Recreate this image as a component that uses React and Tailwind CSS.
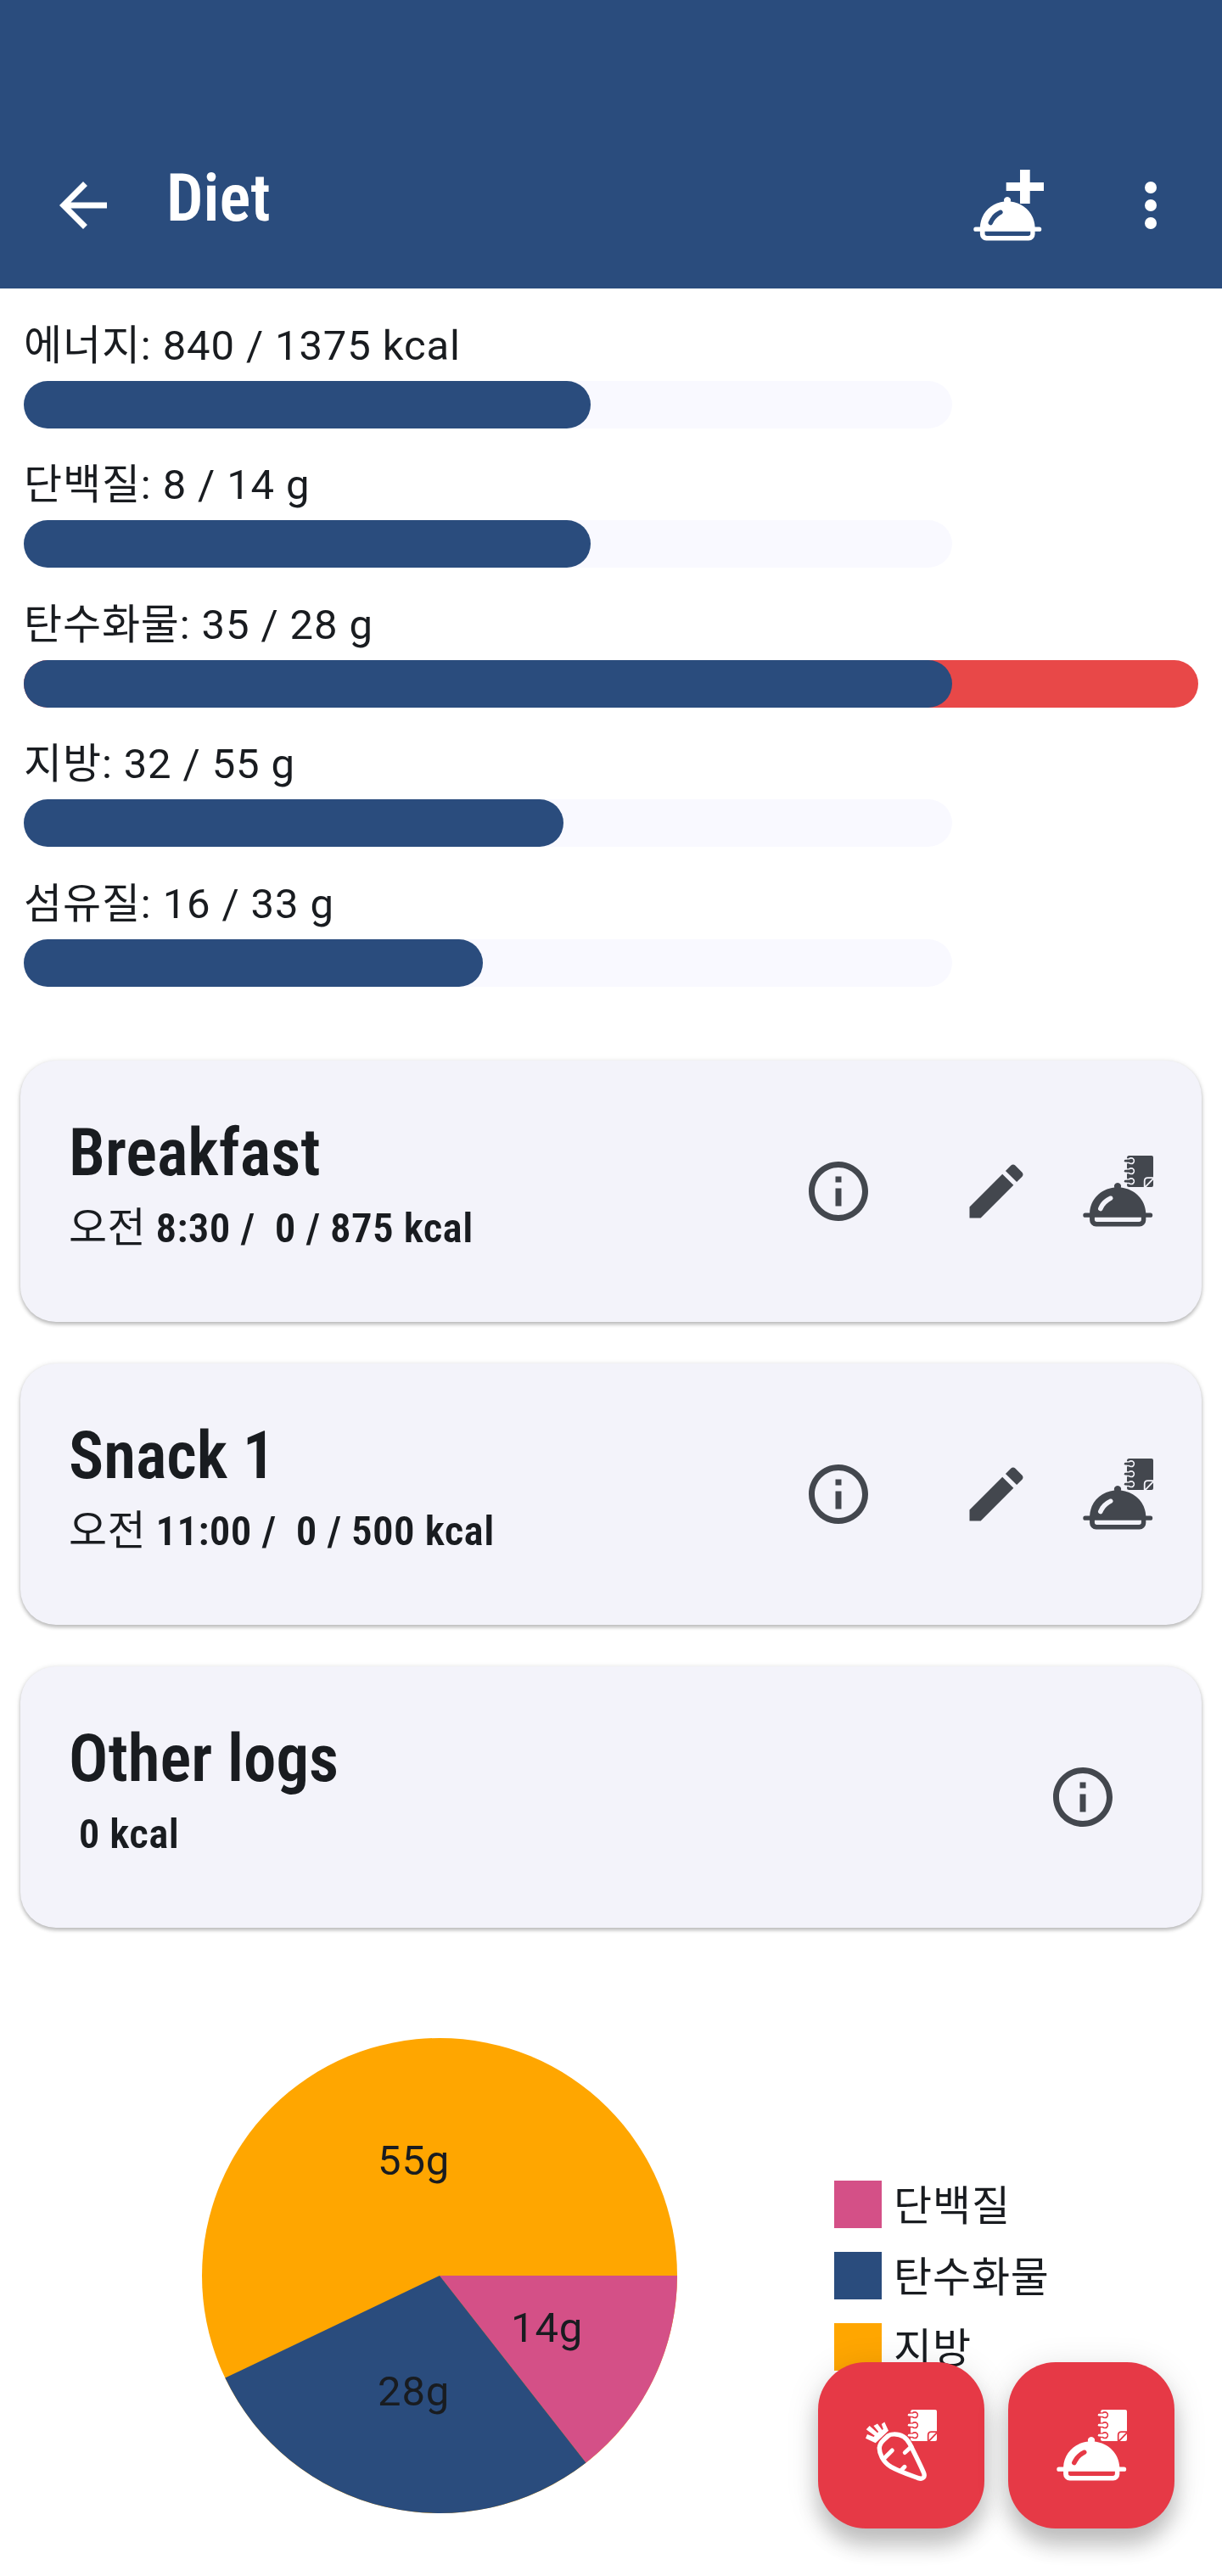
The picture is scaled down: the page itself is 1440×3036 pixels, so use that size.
const NUTRIENTS = [
  { label: '에너지: 840 / 1375 kcal', width: 668 },
  { label: '단백질: 8 / 14 g', width: 668 },
  { label: '탄수화물: 35 / 28 g', width: 1094, over: true },
  { label: '지방: 32 / 55 g', width: 636 },
  { label: '섬유질: 16 / 33 g', width: 541 },
];

const LEGEND = [
  { label: '단백질', color: 'bg-[#d45087]' },
  { label: '탄수화물', color: 'bg-[#2a4c7d]' },
  { label: '지방', color: 'bg-[#ffa600]' },
];

function Icon({ viewBox = '0 0 24 24', children }) {
  return (
    <svg className="size-[84px] shrink-0" viewBox={viewBox} fill="currentColor">
      {children}
    </svg>
  );
}

const ArrowBack = () => (
  <Icon>
    <path d="M20 11H7.83l5.59-5.59L12 4l-8 8 8 8 1.41-1.41L7.83 13H20v-2z" />
  </Icon>
);

const MoreVert = () => (
  <Icon>
    <circle cx="12" cy="6" r="2" />
    <circle cx="12" cy="12" r="2" />
    <circle cx="12" cy="18" r="2" />
  </Icon>
);

const Info = () => (
  <Icon>
    <path d="M11 7h2v2h-2zm0 4h2v6h-2zm1-9C6.48 2 2 6.48 2 12s4.48 10 10 10 10-4.48 10-10S17.52 2 12 2zm0 18c-4.41 0-8-3.59-8-8s3.59-8 8-8 8 3.59 8 8-3.59 8-8 8z" />
  </Icon>
);

const Edit = () => (
  <Icon>
    <path d="M3 17.25V21h3.75L17.81 9.94l-3.75-3.75L3 17.25zM20.71 7.04c.39-.39.39-1.02 0-1.41l-2.34-2.34c-.39-.39-1.02-.39-1.41 0l-1.83 1.83 3.75 3.75 1.83-1.83z" />
  </Icon>
);

function Cloche() {
  return (
    <path
      fillRule="evenodd"
      d="M38.2 37.6a4.1 4.1 0 1 1 7.6 0C62 39.4 74.6 51.5 75.3 67.6H80.6a2.6 2.6 0 0 1 0 5.2H75.3V76a7.5 7.5 0 0 1-7.5 7.5H16.6A7.5 7.5 0 0 1 9.1 76V72.8H3.9a2.6 2.6 0 0 1 0-5.2H9.1C9.8 51.5 22 39.4 38.2 37.6ZM14.9 72.8V75.2a2.7 2.7 0 0 0 2.7 2.7H67.2a2.7 2.7 0 0 0 2.7-2.7V72.8ZM33 47.6C26.500 50.500 22 55 19.300 61.300A2.700 2.700 0 1 0 24.300 63.700C26.600 58.500 30.300 55 35.500 52.300A2.700 2.700 0 0 0 33 47.600Z"
    />
  );
}

function Notebook() {
  return (
    <>
      <mask id="notebook-cuts" maskUnits="userSpaceOnUse" x="45" y="-1" width="40" height="40">
        <rect x="45" y="-1" width="40" height="40" fill="#fff" />
        {[6.2, 18.2, 30.2].map((y) => (
          <path
            key={y}
            d={`M52 ${y - 2.2}H55.5Q56.3 ${y - 3.3} 58 ${y - 3.3}A3.3 3.3 0 0 1 58 ${y + 3.3}Q56.3 ${y + 3.3} 55.5 ${y + 2.2}H52`}
            stroke="#000"
            strokeWidth="1.7"
            fill="none"
          />
        ))}
        <path d="M84.5 26.2H77.5Q73.7 26.2 73.7 30V37.5M84 27.2L74.7 36.8" stroke="#000" strokeWidth="1.8" fill="none" />
      </mask>
      <g mask="url(#notebook-cuts)">
        <path d="M55.5 0H82Q84 0 84 2V35Q84 37 82 37H55.5Q53 37 53 34.5V2.5Q53 0 55.5 0Z" />
      </g>
      {[6.2, 18.2, 30.2].map((y) => (
        <path key={y} d={`M51.2 ${y}H59`} stroke="currentColor" strokeWidth="2.8" strokeLinecap="round" />
      ))}
    </>
  );
}

const AddMeal = () => (
  <Icon viewBox="0 0 84 84">
    <path d="M56 0H67.7V15H84V25H67.7V40H56V25H39.7V15H56Z" />
    <g transform="scale(.977 1)">
      <Cloche />
    </g>
  </Icon>
);

const LogMeal = () => (
  <Icon viewBox="0 0 84 84">
    <Cloche />
    <Notebook />
  </Icon>
);

const LogIngredient = () => (
  <Icon viewBox="0 0 84 84">
    <Notebook />
    <path d="M0 33.7L2 29L9.5 32L10.8 30.8L.7 23.3L4.7 19L14 27.2L15.2 26L9.4 19L14 16.5L19.6 24L20.8 22.8L18.8 17L22.3 14.4L27 24.7L11.7 39.3Z" />
    <g fill="none" stroke="currentColor" strokeWidth="5.4" strokeLinecap="round">
      <path d="M33.3 28.9C41 28.7 48 32.5 52.2 40.5C58 52 64 64 68.3 73.8C70.8 79.3 67.5 82.6 62 80.6C52 77 40 73 30 67.4C20 61.5 16 51 16.3 45C16.4 40.5 19 38 21.5 35.5L26.5 30.9C28.5 29.3 30.5 28.9 33.3 28.9Z" />
      <path d="M31.3 48L22 57.3M46.3 50.5L54 43.5M46 67.3L42 71.5" strokeWidth="5" />
    </g>
  </Icon>
);

function ProgressRow({ label, width, over }) {
  return (
    <div>
      <p className="text-[49px] leading-[70px] tracking-[0.875px]">{label}</p>
      <div className={`mt-1.5 h-14 rounded-full ${over ? 'w-[1384px] bg-[#e84848]' : 'w-[1094px] bg-[#f9f9ff]'}`}>
        <div className="h-14 rounded-full bg-[#2a4c7d]" style={{ width }} />
      </div>
    </div>
  );
}

function Card({ title, subtitle, children }) {
  return (
    <section className="flex h-[308px] items-center justify-between rounded-[42px] bg-[#f3f3fa] pl-[57px] shadow-[0_3px_4px_rgba(0,0,0,0.2),0_1px_6px_rgba(0,0,0,0.14)]">
      <div className="self-start pt-[60px]">
        <h2 className="font-semibold text-[77px] leading-[98px] [font-stretch:75%]">{title}</h2>
        <p className="mt-[5px] whitespace-pre font-semibold text-[49px] leading-[70px] tracking-[0.35px] [font-stretch:75%]">
          {subtitle}
        </p>
      </div>
      <div className="flex text-[#43474e]">{children}</div>
    </section>
  );
}

function MealActions() {
  return (
    <div className="flex pr-[57px]">
      <Info />
      <div className="mr-[59px] ml-[102px] flex">
        <Edit />
      </div>
      <LogMeal />
    </div>
  );
}

function Fab({ children }) {
  return (
    <button className="flex size-[196px] items-center justify-center rounded-[56px] bg-[#e63946] text-white shadow-[0_20px_24px_rgba(0,0,0,0.2),0_6px_40px_rgba(0,0,0,0.12)]">
      {children}
    </button>
  );
}

function Time({ children }) {
  return <span className="font-normal">{children}</span>;
}

export default function App() {
  return (
    <div className="relative h-[3036px] w-[1440px] overflow-hidden bg-white font-['Roboto','Noto_Sans_CJK_KR',sans-serif] text-[#191c20]">
      <header className="flex h-[340px] items-center bg-[#2a4c7d] pt-36 pr-[42px] pl-14 text-white">
        <ArrowBack />
        <h1 className="ml-14 flex-1 pb-4 font-semibold text-[77px] leading-[98px] [font-stretch:75%]">Diet</h1>
        <AddMeal />
        <div className="ml-[84px] flex">
          <MoreVert />
        </div>
      </header>

      <div className="flex flex-col gap-[32.4px] px-7 pt-[33px]">
        {NUTRIENTS.map((n) => (
          <ProgressRow key={n.label} {...n} />
        ))}
      </div>

      <main className="mt-[87.400px] flex flex-col gap-[49px] px-6">
        <Card title="Breakfast" subtitle={<><Time>오전</Time>{' 8:30 /  0 / 875 kcal'}</>}>
          <MealActions />
        </Card>
        <Card title="Snack 1" subtitle={<><Time>오전</Time>{' 11:00 /  0 / 500 kcal'}</>}>
          <MealActions />
        </Card>
        <Card title="Other logs" subtitle=" 0 kcal">
          <div className="flex pr-[98px]">
            <Info />
          </div>
        </Card>
      </main>

      <section className="mt-[130px] flex pl-[238px]">
        <svg className="size-[560px] overflow-visible" viewBox="-280 -280 560 560">
          <circle r="280" fill="#ffa600" />
          <path d="M0 0H280A280 280 0 0 1 172.5 220.5Z" fill="#d45087" />
          <path d="M0 0L172.5 220.5A280 280 0 0 1 -252.7 120.6Z" fill="#2a4c7d" />
          <g fill="#191c20" fontSize="49" letterSpacing="0.875">
            <text x="84" y="78">14g</text>
            <text x="-73" y="153">28g</text>
            <text x="-73" y="-119">55g</text>
          </g>
        </svg>
        <ul className="mt-[161px] ml-[185px] flex flex-col gap-3.5">
          {LEGEND.map(({ label, color }) => (
            <li key={label} className="flex h-[70px] items-center text-[49px] leading-[70px] tracking-[0.875px]">
              <span className={`mr-3.5 size-14 ${color}`} />
              <span className="pt-1.5">{label}</span>
            </li>
          ))}
        </ul>
      </section>

      <div className="absolute right-14 bottom-14 flex gap-7">
        <Fab><LogIngredient /></Fab>
        <Fab><LogMeal /></Fab>
      </div>
    </div>
  );
}
